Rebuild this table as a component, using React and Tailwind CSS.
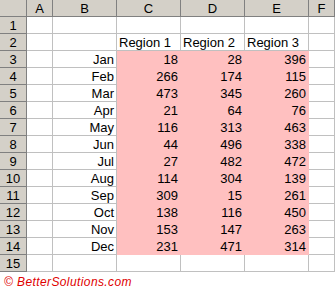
const cols = ['A', 'B', 'C', 'D', 'E', 'F']

const months = ['Jan', 'Feb', 'Mar', 'Apr', 'May', 'Jun', 'Jul', 'Aug', 'Sep', 'Oct', 'Nov', 'Dec']

const data = [
  [18, 28, 396],
  [266, 174, 115],
  [473, 345, 260],
  [21, 64, 76],
  [116, 313, 463],
  [44, 496, 338],
  [27, 482, 472],
  [114, 304, 139],
  [309, 15, 261],
  [138, 116, 450],
  [153, 147, 263],
  [231, 471, 314],
]

const hdr = 'flex items-center justify-center bg-[#d4d0c8] border-r border-b border-[#808080]'
const cell = 'flex items-center px-[2px] border-r border-b border-[#c0c0c0] bg-white'
const pink = 'flex items-center justify-end px-[2px] border-r border-b border-[#ffc0c0] bg-[#ffc0c0]'

function Row({ n, children }) {
  return (
    <>
      <div className={hdr}>{n}</div>
      {children}
    </>
  )
}

export default function App() {
  return (
    <div className="w-[335px] h-[288px] overflow-hidden bg-white text-[13px] leading-none text-black font-['Liberation_Sans',Arial,sans-serif]">
      <div className="grid grid-cols-[27px_26px_64px_64px_64px_64px_1fr] grid-rows-[17px_repeat(15,17px)]">
        <div className={hdr} />
        {cols.map((c) => (
          <div key={c} className={hdr}>
            {c}
          </div>
        ))}

        <Row n={1}>
          {cols.map((c) => (
            <div key={c} className={cell} />
          ))}
        </Row>

        <Row n={2}>
          <div className={cell} />
          <div className={cell} />
          <div className={cell}>Region 1</div>
          <div className={cell}>Region 2</div>
          <div className={cell}>Region 3</div>
          <div className={cell} />
        </Row>

        {months.map((m, i) => (
          <Row key={m} n={i + 3}>
            <div className={cell} />
            <div className={`${cell} justify-end`}>{m}</div>
            {data[i].map((v, j) => (
              <div key={j} className={pink}>
                {v}
              </div>
            ))}
            <div className={cell} />
          </Row>
        ))}

        <Row n={15}>
          {cols.map((c) => (
            <div key={c} className={cell} />
          ))}
        </Row>
      </div>
      <div className="pl-[4px] pt-[4px] text-[12px] italic tracking-[0.4px] text-[#e00000]">
        © BetterSolutions.com
      </div>
    </div>
  )
}
